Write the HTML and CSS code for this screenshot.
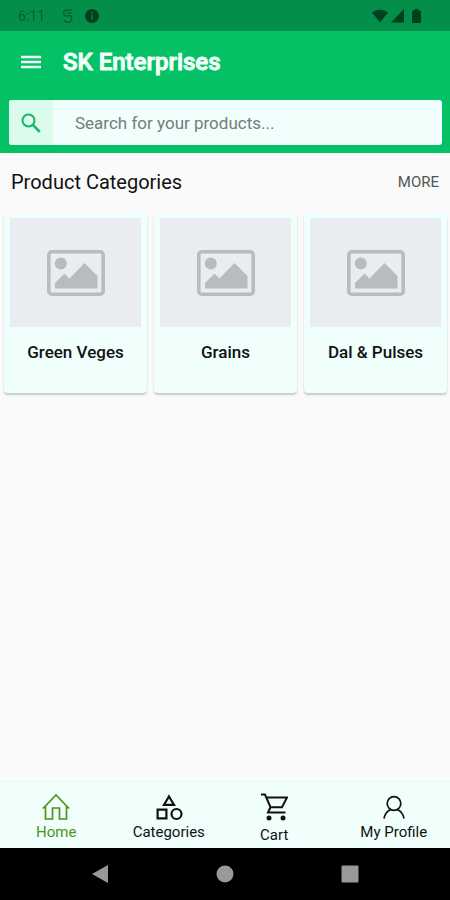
FILE: index.html
```html
<!DOCTYPE html>
<html lang="en">
<head>
<meta charset="utf-8">
<meta name="viewport" content="width=device-width, initial-scale=1">
<title>SK Enterprises</title>
<link rel="stylesheet" href="styles.css">
</head>
<body>
<div class="status">
  <span class="clock">6:11</span>
  <svg class="status-s" width="12" height="14" viewBox="0 0 12 14" fill="none" stroke="currentColor" stroke-width="1.500"><path d="M10 1H3.500L1.800 2.500V5.500L3 6.800H9.500V11L7.500 13H4L2 11M4.500 4H9.500"/></svg>
  <svg width="14" height="14" viewBox="0 0 14 14"><circle cx="7" cy="7" r="7" fill="currentColor"/><path d="M7 3.200V4.800M7 6V10.800" stroke="#038f4a" stroke-width="1.300"/></svg>
  <svg class="wifi" width="16" height="14" viewBox="0 0 16 14" fill="currentColor"><path d="M0 3.500Q8-2.500 16 3.500L8 13.500Z"/></svg>
  <svg width="13" height="14" viewBox="0 0 13 14" fill="currentColor"><path d="M13 0V13.500H0Z"/></svg>
  <svg class="battery" width="9" height="14" viewBox="0 0 9 14" fill="currentColor"><path d="M2.500 0H6.500V1.500H8Q9 1.500 9 2.500V13Q9 14 8 14H1Q0 14 0 13V2.500Q0 1.500 1 1.500H2.500Z"/></svg>
</div>
<header class="header">
  <div class="bar">
    <button class="menu" type="button" aria-label="Menu"><svg width="20" height="16" viewBox="0 0 20 16" stroke="currentColor" stroke-width="2.500"><path d="M0 3H20M0 8H20M0 13H20"/></svg></button>
    <h1>SK Enterprises</h1>
  </div>
  <form class="search">
    <button class="search-go" type="submit" aria-label="Search"><svg width="20" height="20" viewBox="0 0 20 20" fill="none" stroke="currentColor" stroke-width="2"><circle cx="7.500" cy="7.500" r="6"/><path d="M12 12L18.800 18.800" stroke-width="2.500"/></svg></button>
    <input type="text" aria-label="Search for your products" placeholder="Search for your products...">
  </form>
</header>
<main class="content">
  <div class="section-head">
    <h2>Product Categories</h2>
    <a class="more" href="#">MORE</a>
  </div>
  <div class="cards">
    <a class="card" href="#">
      <span class="thumb"><svg width="58" height="46" viewBox="0 0 58 46"><use href="#picture"/></svg></span>
      <span class="name">Green Veges</span>
    </a>
    <a class="card" href="#">
      <span class="thumb"><svg width="58" height="46" viewBox="0 0 58 46"><use href="#picture"/></svg></span>
      <span class="name">Grains</span>
    </a>
    <a class="card" href="#">
      <span class="thumb"><svg width="58" height="46" viewBox="0 0 58 46"><symbol id="picture" viewBox="0 0 58 46"><rect x="1.800" y="1.800" width="54.400" height="42.400" rx="3" fill="none" stroke="#b8bcbf" stroke-width="3.600"/><circle cx="13.800" cy="13.500" r="6" fill="#b8bcbf"/><path d="M8 38.500V33L17.500 23.500L22.500 28.500L37.500 13L50.500 26V38.500Z" fill="#b8bcbf"/></symbol><use href="#picture"/></svg></span>
      <span class="name">Dal &amp; Pulses</span>
    </a>
  </div>
</main>
<nav class="tabs">
  <a class="tab active" href="#"><svg width="28" height="28" viewBox="0 0 28 28" fill="none" stroke="currentColor" stroke-width="1.700"><path d="M1 15.500L14 2L27 15.500M3.500 13.500V26H10.500V15H17.500V26H24.500V13.500"/></svg><span>Home</span></a>
  <a class="tab" href="#"><svg width="28" height="28" viewBox="0 0 28 28" fill="none" stroke="currentColor" stroke-width="2.200"><path d="M14 3.500L19 11.800H9ZM2.600 16.600H11.400V25.400H2.600Z"/><circle cx="21.500" cy="21" r="5"/></svg><span>Categories</span></a>
  <a class="tab cart" href="#"><svg width="28" height="28" viewBox="0 0 28 28" fill="none" stroke="currentColor" stroke-width="2"><path d="M1 1.500H5L10.500 14.200H22L27 4.500H6.500M10.500 14.200L8 19.500H25.500"/><g fill="currentColor" stroke="none"><circle cx="9" cy="25" r="2.500"/><circle cx="23" cy="25" r="2.500"/></g></svg><span>Cart</span></a>
  <a class="tab" href="#"><svg width="28" height="28" viewBox="0 0 28 28" fill="none" stroke="currentColor" stroke-width="1.700"><circle cx="14" cy="10.500" r="6.800"/><path d="M4 25.500C5 20.500 8 17.500 11 16.500M24 25.500C23 20.500 20 17.500 17 16.500"/></svg><span>My Profile</span></a>
</nav>
<div class="system">
  <button type="button" aria-label="Back"><svg width="18" height="18" viewBox="0 0 18 18" fill="currentColor"><path d="M17 0V18L1 9Z"/></svg></button>
  <button type="button" aria-label="Home screen"><svg width="18" height="18" viewBox="0 0 18 18" fill="currentColor"><circle cx="9" cy="9" r="8.500"/></svg></button>
  <button type="button" aria-label="Recent apps"><svg width="18" height="18" viewBox="0 0 18 18" fill="currentColor"><rect x=".5" y=".5" width="17" height="17" rx="1"/></svg></button>
</div>
</body>
</html>
```
FILE: styles.css
```css
* {
  box-sizing: border-box;
}

body {
  margin: 0;
  min-height: 100vh;
  display: flex;
  flex-direction: column;
  background: #fafafa;
  color: #111;
  font-family: Roboto, "Liberation Sans", sans-serif;
}

a {
  color: inherit;
  text-decoration: none;
}

button {
  border: 0;
  padding: 0;
  background: none;
  color: inherit;
}

svg {
  display: block;
  flex: none;
}

.status {
  display: flex;
  align-items: center;
  height: 31px;
  padding: 1px 29px 0 18px;
  background: #038f4a;
  color: #023f20;
}

.clock {
  margin-right: 17px;
  font-size: 14px;
  color: #026334;
}

.status-s {
  margin-right: 11px;
  color: #026334;
}

.wifi {
  margin: 0 3px 0 auto;
}

.battery {
  margin-left: 8px;
}

.header {
  padding: 0 8px 8px 9px;
  background: #03c164;
}

.bar {
  display: flex;
  align-items: center;
  height: 69px;
  padding: 0 12px 8px;
  color: #f0fff8;
}

.menu {
  margin-right: 22px;
}

h1 {
  margin: 0;
  font-size: 24px;
  font-weight: 500;
  -webkit-text-stroke: 1px currentColor;
}

.search {
  display: flex;
  height: 45px;
  border-radius: 3px;
  overflow: hidden;
  background: #f0fffc;
}

.search-go {
  display: grid;
  place-items: center;
  width: 44px;
  background: #dbfced;
  color: #18b467;
}

.search input {
  flex: 1;
  min-width: 0;
  border: 0;
  padding: 0 22px;
  background: none;
  font: inherit;
  font-size: 17px;
}

.search input::placeholder {
  color: #757c7a;
}

.content {
  flex: 1;
}

.section-head {
  display: flex;
  align-items: center;
  justify-content: space-between;
  height: 60px;
  padding: 0 11px 2px;
}

h2 {
  margin: 0;
  font-size: 20px;
  font-weight: 400;
}

.more {
  font-size: 15px;
  color: #555;
}

.cards {
  display: grid;
  grid-template-columns: repeat(3, 1fr);
  gap: 7px;
  padding: 0 3px 0 4px;
}

.card {
  display: flex;
  flex-direction: column;
  height: 180px;
  padding: 5px 6px;
  border-radius: 4px;
  background: #f0fffc;
  box-shadow: 0 2px 2px #c4cccb;
}

.thumb {
  display: grid;
  place-items: center;
  height: 109px;
  background: #e9edf1;
}

.name {
  margin-top: 15px;
  font-size: 17px;
  font-weight: 500;
  line-height: 20px;
  text-align: center;
}

.tabs {
  display: grid;
  grid-template-columns: repeat(4, 1fr);
  height: 67px;
  border-top: 1px solid #ebf5f2;
  background: #f0fffc;
}

.tab {
  display: flex;
  flex-direction: column;
  align-items: center;
  padding-top: 11px;
  font-size: 15px;
  line-height: 18px;
  white-space: nowrap;
}

.tab span {
  margin-top: 2px;
}

.active {
  color: #4a9418;
}

.cart {
  padding-right: 14px;
}

.cart span {
  margin-top: 5px;
}

.system {
  display: flex;
  align-items: center;
  justify-content: center;
  gap: 107px;
  height: 52px;
  background: #000;
  color: #999;
}
```
